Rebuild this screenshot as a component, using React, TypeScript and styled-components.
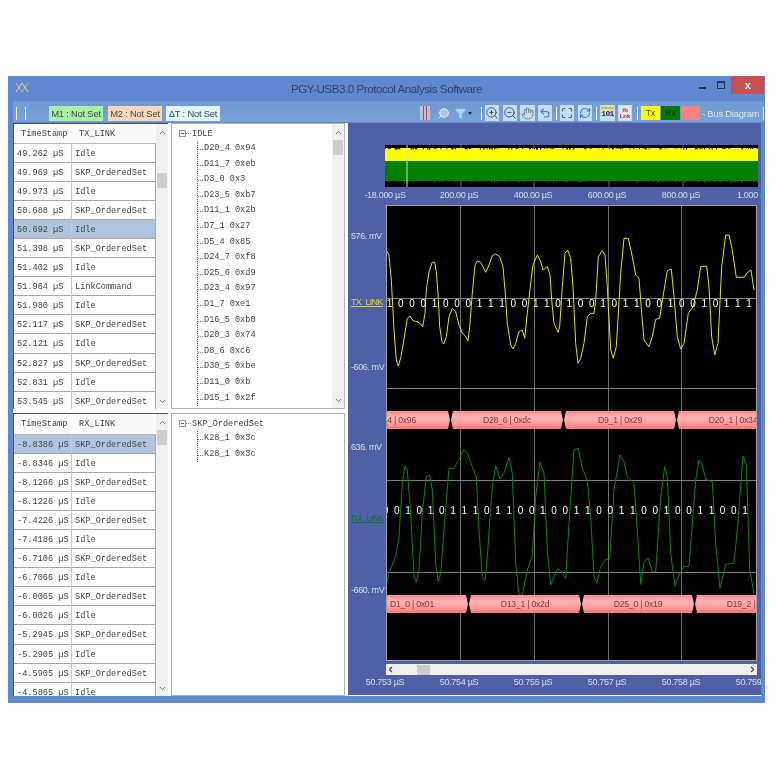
import React from "react";
import styled, { createGlobalStyle } from "styled-components";
import { ChevronDown, ChevronLeft, ChevronRight, ChevronUp, Filter, Hand, Maximize, RefreshCw, Search, Undo2, ZoomIn, ZoomOut } from "lucide-react";

const Global = createGlobalStyle`
  html, body { margin: 0; padding: 0; background: #fff; }
  body { font-family: "Liberation Sans", Arial, sans-serif; }
`;

const Window = styled.div`
  margin: 76px 0 0 8px;
  width: 757px;
  height: 627px;
  background: #5f88d0;
  display: flex;
  flex-direction: column;
  filter: blur(0.4px);
  overflow: hidden;
`;
const TitleBar = styled.div`
  height: 25px;
  flex: none;
  position: relative;
  display: flex;
  align-items: center;
  justify-content: center;
  font-size: 11.6px;
  letter-spacing: -0.45px;
  color: #2f4468;
`;
const AppLogo = styled.svg`
  position: absolute;
  left: 7px;
  top: 5px;
`;
const WinControls = styled.div`
  position: absolute;
  right: 1px;
  top: 0;
  display: flex;
  align-items: flex-start;
`;
const MinBtn = styled.div`
  width: 7px;
  height: 2px;
  background: #26364f;
  margin: 11px 11px 0 0;
`;
const MaxBtn = styled.div`
  width: 6px;
  height: 5px;
  border: 1px solid #26364f;
  border-top-width: 2px;
  margin: 5px 6px 0 0;
`;
const CloseBtn = styled.div`
  width: 33px;
  height: 18px;
  background: #c75050;
  color: #fff;
  font-size: 11px;
  font-weight: 700;
  display: flex;
  align-items: center;
  justify-content: center;
`;
const Toolbar = styled.div`
  height: 21px;
  box-sizing: border-box;
  flex: none;
  margin: 0 1px 1px 5px;
  padding: 3px 4px 0 3px;
  background: linear-gradient(#6f98d3, #7ba3d9);
  display: flex;
  align-items: center;
`;
const Sep = styled.div<{ $ml: number }>`
  width: 1px;
  height: 13px;
  background: #eef4fb;
  flex: none;
  margin-left: ${(p) => p.$ml}px;
`;
const Marker = styled.div<{ $bg: string; $ml: number }>`
  width: 54px;
  height: 15px;
  flex: none;
  margin-left: ${(p) => p.$ml}px;
  background: ${(p) => p.$bg};
  color: #3c4a52;
  font-size: 9.4px;
  letter-spacing: -0.2px;
  line-height: 15px;
  text-align: center;
  white-space: nowrap;
`;
const ToolIcon = styled.div<{ $ml: number; $w: number; $on?: boolean }>`
  width: ${(p) => p.$w}px;
  height: 16px;
  flex: none;
  margin-left: ${(p) => p.$ml}px;
  background: ${(p) => (p.$on ? "#c8dcf0" : "transparent")};
  display: flex;
  align-items: center;
  justify-content: center;
  overflow: hidden;
`;
const RedBars = styled.div`
  width: 10px;
  height: 14px;
  background: #b9c3d4;
  display: flex;
  justify-content: center;
  gap: 2px;
  &::before, &::after { content: ""; width: 1px; height: 14px; background: #d23a3a; }
`;
const MiniBits = styled.span`
  font-family: "Liberation Mono", monospace;
  font-size: 8px;
  font-weight: 700;
  color: #333;
  letter-spacing: -0.6px;
  border-top: 2px solid #e0c000;
  line-height: 10px;
`;
const MiniStack = styled.span`
  font-size: 6px;
  font-weight: 700;
  line-height: 6px;
  color: #a03040;
  text-align: center;
  background: #e0e6ee;
  padding: 1px;
`;
const Caret = styled.div`
  flex: none;
  width: 0;
  height: 0;
  margin: 0 0 0 2px;
  border: 2px solid transparent;
  border-top: 3px solid #223;
  border-bottom: 0;
`;
const ColorKey = styled.div<{ $bg: string; $ml: number; $fg?: string }>`
  width: 19px;
  height: 14px;
  flex: none;
  margin-left: ${(p) => p.$ml}px;
  background: ${(p) => p.$bg};
  color: ${(p) => p.$fg ?? "#3c4a30"};
  font-size: 8.5px;
  line-height: 15px;
  text-align: center;
`;
const BusCaption = styled.div`
  flex: none;
  margin-left: 2px;
  width: 56px;
  font-size: 9.4px;
  letter-spacing: -0.2px;
  color: #dbe5f2;
  white-space: nowrap;
`;
const Main = styled.div`
  flex: none;
  margin: 0 4px 7px 5px;
  height: 573px;
  display: grid;
  grid-template-columns: 155px 174px 414px;
  grid-template-rows: 286px 283px;
  column-gap: 3px;
  row-gap: 4px;
  background: #fff;
`;
const TablePane = styled.div`
  display: flex;
  background: #fff;
  border-top: 1px solid #505050;
  border-left: 1px solid #505050;
  overflow: hidden;
  font-family: "Liberation Mono", monospace;
  font-size: 8.6px;
  color: #444;
`;
const TableBody = styled.div`
  width: 142px;
  flex: none;
  overflow: hidden;
`;
const HeadRow = styled.div<{ $h: number }>`
  height: ${(p) => p.$h}px;
  display: grid;
  grid-template-columns: 58px 1fr;
  align-items: center;
  padding-top: 1px;
  background: #fafafa;
  border-bottom: 1px solid #b8b8b8;
  box-sizing: border-box;
`;
const HeadCell = styled.div<{ $pl: number }>`
  padding-left: ${(p) => p.$pl}px;
`;
const Row = styled.div<{ $sel?: boolean }>`
  height: 19.1px;
  box-sizing: border-box;
  display: grid;
  grid-template-columns: 58px 1fr;
  background: ${(p) => (p.$sel ? "#b0c4de" : "#fff")};
  border-bottom: 1px solid #a8a8a8;
  border-right: 1px solid #a8a8a8;
`;
const StampCell = styled.div`
  padding-left: 3px;
  line-height: 21px;
  white-space: nowrap;
  border-right: 1px solid #c8c8c8;
`;
const NameCell = styled.div`
  padding-left: 3px;
  line-height: 21px;
  white-space: nowrap;
`;
const VScroll = styled.div`
  width: 12px;
  flex: none;
  background: #f0f0f0;
  display: flex;
  flex-direction: column;
  align-items: center;
  color: #666;
`;
const ArrowBox = styled.div<{ $end?: boolean }>`
  height: 16px;
  flex: none;
  display: flex;
  align-items: center;
  justify-content: center;
  margin-top: ${(p) => (p.$end ? "auto" : 0)};
`;
const Thumb = styled.div<{ $mt: number }>`
  width: 10px;
  height: 15px;
  flex: none;
  background: #cdcdcd;
  margin-top: ${(p) => p.$mt}px;
`;
const TreePane = styled.div`
  display: flex;
  background: #fff;
  border: 1px solid #b0b0b0;
  overflow: hidden;
  font-family: "Liberation Mono", monospace;
  font-size: 8.6px;
  color: #444;
`;
const TreeBody = styled.div`
  flex: 1;
  padding: 2px 0 0 7px;
`;
const TreeRoot = styled.div`
  height: 15px;
  display: flex;
  align-items: center;
`;
const Toggle = styled.div`
  width: 5px;
  height: 5px;
  border: 1px solid #999;
  position: relative;
  flex: none;
  &::after {
    content: "";
    position: absolute;
    left: 1px;
    top: 2px;
    width: 3px;
    height: 1px;
    background: #555;
  }
`;
const RootStub = styled.div`
  width: 5px;
  margin: 0 1px 0 0;
  border-top: 1px dotted #777;
  flex: none;
`;
const TreeKids = styled.div`
  margin-left: 18px;
  border-left: 1px dotted #666;
`;
const TreeKid = styled.div`
  height: 15.6px;
  line-height: 15.6px;
  padding-left: 6px;
  position: relative;
  white-space: nowrap;
  &::before {
    content: "";
    position: absolute;
    left: 0;
    top: 8px;
    width: 5px;
    border-top: 1px dotted #777;
  }
`;
const ScopePane = styled.div`
  grid-column: 3;
  grid-row: 1 / span 2;
  background: #5060a6;
  padding-top: 22px;
  height: 572px;
  width: 413px;
  box-sizing: border-box;
  overflow: hidden;
  display: flex;
  flex-direction: column;
`;
const Overview = styled.svg`
  display: block;
  flex: none;
  margin-left: 37px;
`;
const AxisRow = styled.div<{ $h: number }>`
  display: flex;
  flex: none;
  height: ${(p) => p.$h}px;
  align-items: center;
  width: 413px;
  overflow: hidden;
`;
const AxisLabel = styled.div`
  width: 74px;
  flex: none;
  text-align: center;
  font-size: 9px;
  letter-spacing: -0.3px;
  color: #d8dff0;
  white-space: nowrap;
`;
const PlotRow = styled.div`
  display: flex;
  flex: none;
  margin-top: 3px;
`;
const Gutter = styled.div`
  width: 38px;
  flex: none;
  display: flex;
  flex-direction: column;
`;
const YLabel = styled.div<{ $mt: number; $c?: string; $u?: boolean }>`
  margin-top: ${(p) => p.$mt}px;
  height: 12px;
  line-height: 12px;
  padding-left: 3px;
  font-size: 9px;
  letter-spacing: ${(p) => (p.$u ? "-0.7px" : "-0.4px")};
  color: ${(p) => p.$c ?? "#d8dff0"};
  text-decoration: ${(p) => (p.$u ? "underline" : "none")};
  white-space: nowrap;
`;
const Plot = styled.div`
  width: 371px;
  height: 456px;
  box-sizing: border-box;
  border: 1px solid #a0a0a0;
  background: #000;
  position: relative;
  overflow: hidden;
  flex: none;
`;
const PlotSvg = styled.svg`
  position: absolute;
  left: 0;
  top: 0;
`;
const Bits = styled.div<{ $top: number; $left: number }>`
  position: absolute;
  top: ${(p) => p.$top}px;
  left: ${(p) => p.$left}px;
  display: flex;
  height: 12px;
  color: #fff;
  font-size: 10px;
  line-height: 12px;
`;
const Bit = styled.span`
  width: 11.24px;
  flex: none;
  text-align: center;
`;
const BusRow = styled.div<{ $top: number }>`
  position: absolute;
  top: ${(p) => p.$top}px;
  left: 0;
  display: flex;
  gap: 1px;
  width: 370px;
  overflow: hidden;
`;
const BusSeg = styled.div<{ $ml?: number }>`
  width: 112px;
  height: 18px;
  flex: none;
  margin-left: ${(p) => p.$ml ?? 0}px;
  background: linear-gradient(#ff8a8a, #ffb4b4 35%, #ff9a9a 70%, #ff7474);
  clip-path: polygon(2px 0, calc(100% - 2px) 0, 100% 50%, calc(100% - 2px) 100%, 2px 100%, 0 50%);
  color: #7e3a44;
  font-size: 8.6px;
  letter-spacing: -0.2px;
  line-height: 18px;
  text-align: center;
  white-space: nowrap;
`;
const HScroll = styled.div`
  flex: none;
  margin: 3px 0 0 38px;
  width: 371px;
  height: 11px;
  background: #f0f0f0;
  display: flex;
  align-items: center;
  color: #444;
`;
const HThumb = styled.div`
  width: 13px;
  height: 10px;
  background: #cdcdcd;
  margin-left: 22px;
`;
const HEnd = styled.div`
  margin-left: auto;
  display: flex;
`;

const SKP = "SKP_OrderedSet";
const txRows: [string, string][] = [
  ["49.262", "Idle"], ["49.969", SKP], ["49.973", "Idle"], ["50.688", SKP], ["50.692", "Idle"],
  ["51.398", SKP], ["51.402", "Idle"], ["51.964", "LinkCommand"], ["51.980", "Idle"], ["52.117", SKP],
  ["52.121", "Idle"], ["52.827", SKP], ["52.831", "Idle"], ["53.545", SKP],
];
const rxRows: [string, string][] = [
  ["-8.8386", SKP], ["-8.8346", "Idle"], ["-8.1266", SKP], ["-8.1226", "Idle"], ["-7.4226", SKP],
  ["-7.4186", "Idle"], ["-6.7106", SKP], ["-6.7066", "Idle"], ["-6.0065", SKP], ["-6.0026", "Idle"],
  ["-5.2945", SKP], ["-5.2905", "Idle"], ["-4.5905", SKP], ["-4.5865", "Idle"],
];
const treeTx = ["D20_4 0x94", "D11_7 0xeb", "D3_0 0x3", "D23_5 0xb7", "D11_1 0x2b", "D7_1 0x27", "D5_4 0x85", "D24_7 0xf8", "D25_6 0xd9", "D23_4 0x97", "D1_7 0xe1", "D16_5 0xb0", "D20_3 0x74", "D8_6 0xc6", "D30_5 0xbe", "D11_0 0xb", "D15_1 0x2f"];

const txWave = [143,152,150,165,157,240,165,390,172,480,178,498,186,470,193,430,205,355,213,348,222,362,235,365,245,372,251,380,258,340,262,270,270,215,280,187,287,187,292,215,297,280,302,380,309,425,314,432,322,410,330,350,340,325,350,335,360,375,370,400,380,410,387,422,392,380,400,280,408,195,415,183,425,187,440,217,450,195,460,167,470,162,482,170,492,200,498,270,505,370,515,435,522,447,530,430,540,395,550,390,557,415,565,340,575,250,582,195,595,165,605,185,612,210,625,200,633,225,638,300,645,370,657,397,662,380,670,260,678,160,686,150,695,175,702,260,710,430,717,490,725,475,735,430,745,350,755,340,765,340,770,300,778,170,790,152,798,165,805,260,815,450,823,475,832,440,845,220,855,115,868,115,880,170,890,225,900,235,908,340,915,420,930,440,940,410,950,358,962,355,972,290,985,212,997,207,1005,290,1015,410,1025,447,1035,430,1048,340,1062,320,1075,270,1085,200,1103,198,1110,260,1118,410,1127,465,1137,430,1148,200,1160,105,1170,105,1180,150,1192,232,1215,232,1225,218,1236,210,1245,270];
const rxWave = [143,460,150,430,170,380,180,320,190,160,198,108,205,120,215,250,225,440,232,457,240,420,250,250,262,140,272,135,280,180,290,400,298,457,305,430,318,260,330,115,345,115,358,92,375,58,385,70,400,110,412,140,420,300,430,440,438,452,445,380,460,170,470,107,483,147,495,130,510,82,520,130,530,400,540,495,550,495,565,420,580,380,590,200,603,95,615,130,625,360,635,465,645,440,655,418,665,420,680,445,690,280,705,60,718,55,730,115,745,150,755,260,765,440,773,460,785,410,800,388,812,388,825,180,843,75,855,95,865,140,885,160,895,300,905,463,915,395,928,385,940,425,950,425,965,200,977,110,985,140,995,370,1008,468,1020,435,1035,408,1050,410,1070,150,1080,90,1090,105,1100,148,1120,155,1130,340,1143,475,1160,403,1185,400,1195,300,1212,78,1222,105,1232,420,1245,490];

const toPoints = (wave: number[], originY: number) => {
  const out: string[] = [];
  for (let i = 0; i < wave.length; i += 2) {
    out.push(`${(340 + wave[i] / 3 - 388).toFixed(1)},${(originY + wave[i + 1] / 3 - 206).toFixed(1)}`);
  }
  return out.join(" ");
};

const noisePath = (count: number, y: number, h: number, seed: number, width: number) => {
  let s = seed;
  let d = "";
  for (let i = 0; i < count; i++) {
    s = (s * 9301 + 49297) % 233280;
    const x = (s / 233280) * width;
    s = (s * 9301 + 49297) % 233280;
    const l = 0.5 + (s / 233280) * h;
    d += `M${x.toFixed(1)} ${y}v${l.toFixed(1)}`;
  }
  return d;
};

const txBits = "100010001110011010010110010010111".split("");
const rxBits = "001010111011001001100110010011001".split("");

const Table = ({ title, rows, selected, thumb, headH }: { title: string; rows: [string, string][]; selected: number; thumb: number; headH: number }) => (
  <TablePane>
    <TableBody>
      <HeadRow $h={headH}>
        <HeadCell $pl={7}>TimeStamp</HeadCell>
        <HeadCell $pl={7}>{title}</HeadCell>
      </HeadRow>
      {rows.map(([t, n], i) => (
        <Row key={t} $sel={i === selected}>
          <StampCell>{t} µS</StampCell>
          <NameCell>{n}</NameCell>
        </Row>
      ))}
    </TableBody>
    <VScroll>
      <ArrowBox><ChevronUp size={9} strokeWidth={2.5} /></ArrowBox>
      <Thumb $mt={thumb} />
      <ArrowBox $end><ChevronDown size={9} strokeWidth={2.5} /></ArrowBox>
    </VScroll>
  </TablePane>
);

const Tree = ({ root, kids, scroll }: { root: string; kids: string[]; scroll?: boolean }) => (
  <TreePane>
    <TreeBody>
      <TreeRoot>
        <Toggle />
        <RootStub />
        {root}
      </TreeRoot>
      <TreeKids>
        {kids.map((k, i) => <TreeKid key={i}>{k}</TreeKid>)}
      </TreeKids>
    </TreeBody>
    {scroll && (
      <VScroll>
        <ArrowBox><ChevronUp size={9} strokeWidth={2.5} /></ArrowBox>
        <Thumb $mt={0} />
        <ArrowBox $end><ChevronDown size={9} strokeWidth={2.5} /></ArrowBox>
      </VScroll>
    )}
  </TreePane>
);

const overviewTicks = ["-18.000 µS", "200.00 µS", "400.00 µS", "600.00 µS", "800.00 µS", "1.000 mS"];
const timeTicks = ["50.753 µS", "50.754 µS", "50.755 µS", "50.757 µS", "50.758 µS", "50.759 µS"];

export default function App() {
  return (
    <>
      <Global />
      <Window>
        <TitleBar>
          <AppLogo width="15" height="13" viewBox="0 0 15 13" fill="none">
            <path d="M1 2l6 9 6-9" stroke="#d8b060" strokeWidth="1.2" />
            <path d="M1 11l6-9 6 9" stroke="#9fd0e8" strokeWidth="1.2" />
          </AppLogo>
          PGY-USB3.0 Protocol Analysis Software
          <WinControls>
            <MinBtn />
            <MaxBtn />
            <CloseBtn>x</CloseBtn>
          </WinControls>
        </TitleBar>
        <Toolbar>
          <Sep $ml={0} />
          <Sep $ml={8} />
          <Marker $bg="#a8f0a4" $ml={23}>M1 : Not Set</Marker>
          <Marker $bg="#fbd6ba" $ml={5}>M2 : Not Set</Marker>
          <Marker $bg="#dff6fa" $ml={4}>ΔT : Not Set</Marker>
          <ToolIcon $ml={200} $w={10}><RedBars /></ToolIcon>
          <ToolIcon $ml={7} $w={13}><Search size={13} color="#f4f8fc" fill="#ffffff66" strokeWidth={1.6} style={{ transform: "scaleX(-1)" }} /></ToolIcon>
          <ToolIcon $ml={4} $w={12}><Filter size={11} color="#9fdcec" fill="#9fdcec" /></ToolIcon>
          <Caret />
          <Sep $ml={9} />
          <ToolIcon $ml={3} $w={14} $on><ZoomIn size={14} color="#28566a" strokeWidth={1.6} /></ToolIcon>
          <ToolIcon $ml={4} $w={14} $on><ZoomOut size={14} color="#28566a" strokeWidth={1.6} /></ToolIcon>
          <ToolIcon $ml={3} $w={15} $on><Hand size={13} color="#506a80" strokeWidth={1.4} /></ToolIcon>
          <ToolIcon $ml={3} $w={14} $on><Undo2 size={12} color="#3b7fd0" strokeWidth={2.2} /></ToolIcon>
          <Sep $ml={4} />
          <ToolIcon $ml={3} $w={14} $on><Maximize size={12} color="#3d7a66" strokeWidth={2.4} /></ToolIcon>
          <ToolIcon $ml={4} $w={14} $on><RefreshCw size={12} color="#2f7fd8" strokeWidth={2.4} /></ToolIcon>
          <Sep $ml={4} />
          <ToolIcon $ml={3} $w={15} $on><MiniBits>101</MiniBits></ToolIcon>
          <ToolIcon $ml={3} $w={14} $on><MiniStack>th<br />Lnk</MiniStack></ToolIcon>
          <Sep $ml={5} />
          <ColorKey $bg="#ffff00" $ml={3}>Tx</ColorKey>
          <ColorKey $bg="#007a00" $ml={1} $fg="#06300a">Rx</ColorKey>
          <ColorKey $bg="#fd8080" $ml={1} />
          <BusCaption>- Bus Diagram</BusCaption>
          <Sep $ml={5} />
        </Toolbar>
        <Main>
          <Table title="TX_LINK" rows={txRows} selected={4} thumb={33} headH={19.5} />
          <Tree root="IDLE" kids={treeTx} scroll />
          <ScopePane>
            <Overview width="373" height="42" viewBox="0 0 373 42">
              <rect width="373" height="42" fill="#000" />
              <path d="M76 0v42M149 0v42M224 0v42M298 0v42" stroke="#666" />
              <rect y="3" width="373" height="13" fill="#ffff00" />
              <rect y="16" width="373" height="20" fill="#008000" />
              <path d={noisePath(130, 3, 1.2, 17, 373)} stroke="#000" strokeWidth="1" />
              <path d={noisePath(70, 36, 1.5, 91, 373)} stroke="#008000" strokeWidth="1" />
              <path d="M22 0v42" stroke="#d8d8d8" />
            </Overview>
            <AxisRow $h={15}>
              {overviewTicks.map((t) => <AxisLabel key={t}>{t}</AxisLabel>)}
            </AxisRow>
            <PlotRow>
              <Gutter>
                <YLabel $mt={25}>576. mV</YLabel>
                <YLabel $mt={54} $c="#d8d830" $u>TX_LINK</YLabel>
                <YLabel $mt={53}>-606. mV</YLabel>
                <YLabel $mt={68}>636. mV</YLabel>
                <YLabel $mt={59} $c="#0c7a14" $u>RX_LINK</YLabel>
                <YLabel $mt={60}>-660. mV</YLabel>
              </Gutter>
              <Plot>
                <PlotSvg width="369" height="454" viewBox="0 0 369 454" fill="none">
                  <path d="M73.5 0v454M147.5 0v454M221.5 0v454M294.5 0v454" stroke="#6e6e6e" />
                  <path d="M0 92.5h369M0 182.5h369M0 274.5h369M0 366.5h369" stroke="#808080" />
                  <polyline points={toPoints(txWave, 200)} stroke="#e6e600" strokeWidth="1" />
                  <polyline points={toPoints(rxWave, 430)} stroke="#0b8a0b" strokeWidth="1" />
                </PlotSvg>
                <Bits $top={92} $left={-3}>
                  {txBits.map((b, i) => <Bit key={i}>{b}</Bit>)}
                </Bits>
                <BusRow $top={205}>
                  <BusSeg $ml={-49}>D5_4 | 0x96</BusSeg>
                  <BusSeg>D28_6 | 0xdc</BusSeg>
                  <BusSeg>D9_1 | 0x29</BusSeg>
                  <BusSeg>D20_1 | 0x34</BusSeg>
                </BusRow>
                <Bits $top={299} $left={-7}>
                  {rxBits.map((b, i) => <Bit key={i}>{b}</Bit>)}
                </Bits>
                <BusRow $top={389}>
                  <BusSeg $ml={-31}>D1_0 | 0x01</BusSeg>
                  <BusSeg>D13_1 | 0x2d</BusSeg>
                  <BusSeg>D25_0 | 0x19</BusSeg>
                  <BusSeg>D19_2 | 0x53</BusSeg>
                </BusRow>
              </Plot>
            </PlotRow>
            <HScroll>
              <ChevronLeft size={9} strokeWidth={3} />
              <HThumb />
              <HEnd><ChevronRight size={9} strokeWidth={3} /></HEnd>
            </HScroll>
            <AxisRow $h={13}>
              {timeTicks.map((t) => <AxisLabel key={t}>{t}</AxisLabel>)}
            </AxisRow>
          </ScopePane>
          <Table title="RX_LINK" rows={rxRows} selected={0} thumb={0} headH={20.5} />
          <Tree root="SKP_OrderedSet" kids={["K28_1 0x3c", "K28_1 0x3c"]} />
        </Main>
      </Window>
    </>
  );
}
